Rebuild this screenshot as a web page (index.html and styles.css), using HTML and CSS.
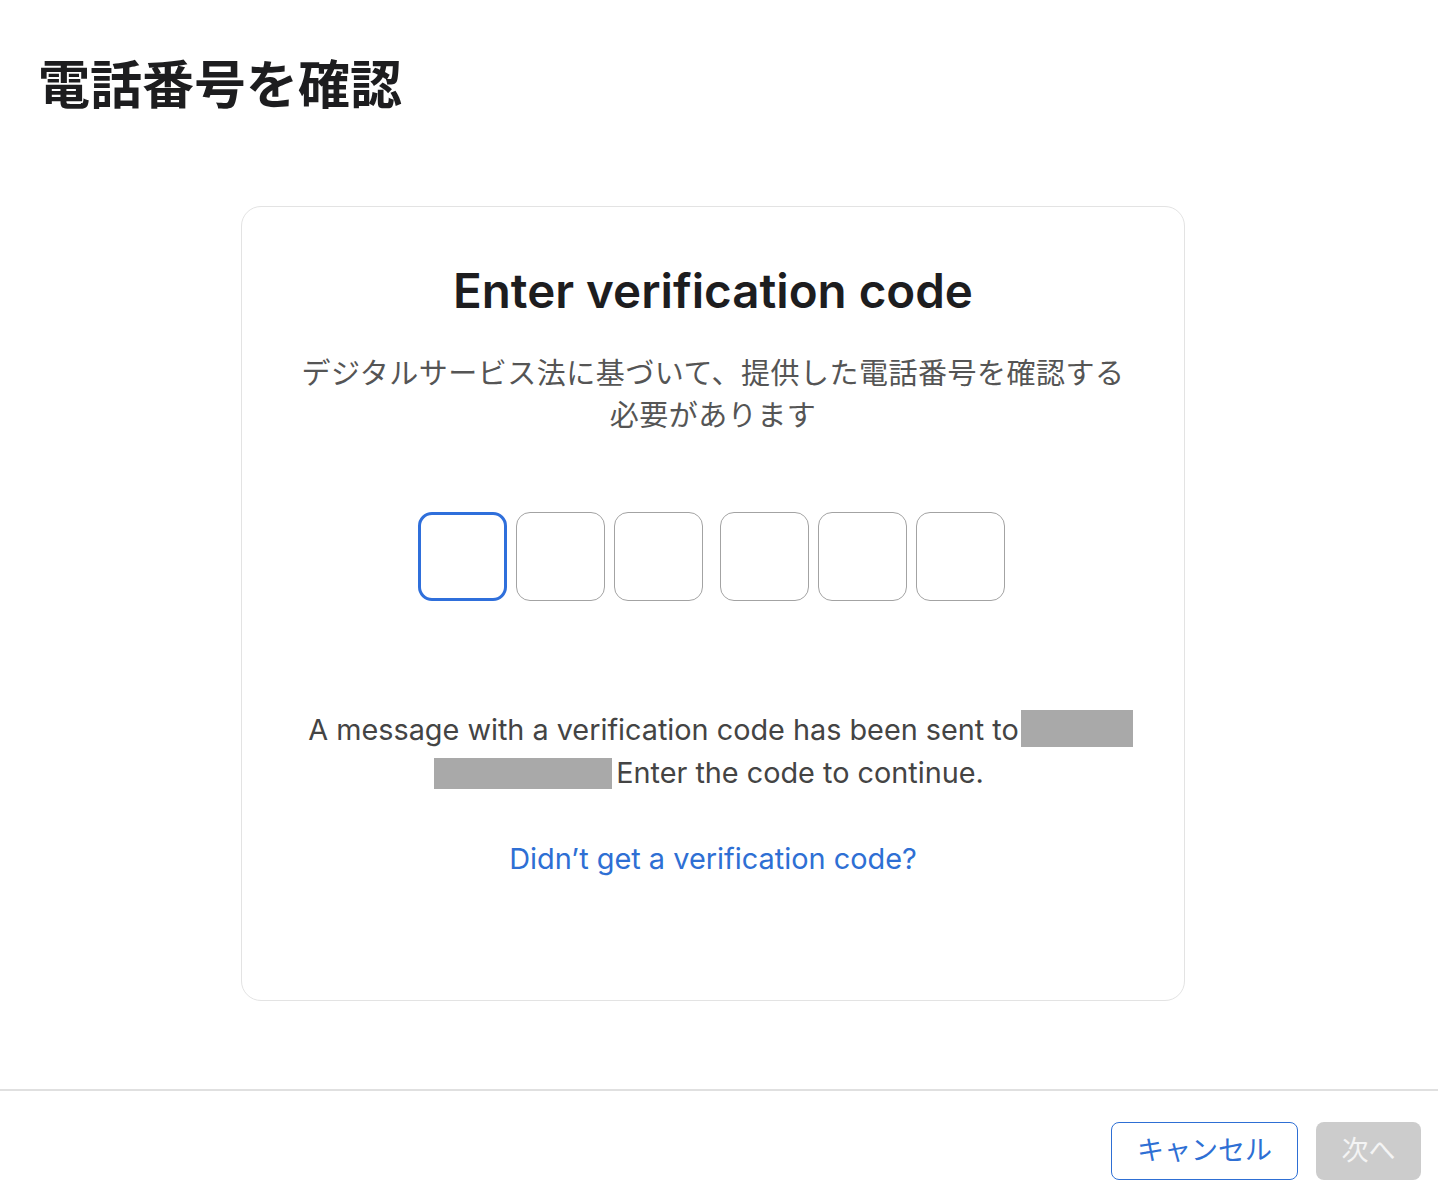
FILE: index.html
```html
<!DOCTYPE html>
<html lang="ja">
  <head>
    <meta charset="UTF-8" />
    <meta name="viewport" content="width=device-width, initial-scale=1.0" />
    <title>電話番号を確認</title>
    <link rel="stylesheet" href="styles.css">
  </head>
  <body>
    <div class="page">
      <h1 class="page-title">電話番号を確認</h1>

      <div class="card">
        <h2 class="card-title">Enter verification code</h2>
        <p class="subtitle">
          デジタルサービス法に基づいて、提供した電話番号を確認する<br>必要があります
        </p>

        <div class="code-inputs">
          <div class="code-group">
            <input class="code-box active" type="text" maxlength="1" />
            <input class="code-box" type="text" maxlength="1" />
            <input class="code-box" type="text" maxlength="1" />
          </div>
          <div class="code-group">
            <input class="code-box" type="text" maxlength="1" />
            <input class="code-box" type="text" maxlength="1" />
            <input class="code-box" type="text" maxlength="1" />
          </div>
        </div>

        <div class="message">
          <span class="message-line first">A message with a verification code has been sent to<span class="redact redact-a"></span></span>
          <span class="message-line second"><span class="redact redact-b"></span>Enter the code to continue.</span>
        </div>

        <a class="resend" href="#">Didn’t get a verification code?</a>
      </div>
    </div>

    <div class="footer">
      <button class="btn btn-cancel">キャンセル</button>
      <button class="btn btn-next" disabled>次へ</button>
    </div>
  </body>
</html>
```

FILE: styles.css
```css
body {
  margin: 0;
  background-color: #fff;
  color: #1d1d1f;
  font-family: Inter, "Noto Sans CJK JP", sans-serif;
}

.page {
  height: 1089px;
  padding-top: 47px;
  box-sizing: border-box;
}

.page-title {
  margin: 0 0 0 38px;
  font-family: "Noto Sans CJK JP", sans-serif;
  font-size: 52px;
  font-weight: 700;
  line-height: 70px;
  color: #1d1d1f;
}

.card {
  margin: 89px 0 0 241px;
  width: 944px;
  height: 795px;
  box-sizing: border-box;
  border: 1.5px solid #e3e3e3;
  border-radius: 20px;
  text-align: center;
  padding-top: 56px;
}

.card-title {
  margin: 0;
  font-size: 47.5px;
  font-weight: 600;
  line-height: 56px;
  color: #1d1d1f;
}

.subtitle {
  margin: 31px 0 0;
  font-family: "Noto Sans CJK JP", sans-serif;
  font-size: 29px;
  letter-spacing: 0.5px;
  line-height: 42px;
  color: #555;
}

.code-inputs {
  display: flex;
  justify-content: center;
  gap: 17px;
  margin-top: 78px;
  padding-right: 3px;
}

.code-group {
  display: flex;
  gap: 9px;
}

.code-box {
  width: 89px;
  height: 89px;
  box-sizing: border-box;
  border: 1.5px solid #a3a3a3;
  border-radius: 14px;
  outline: none;
  padding: 0;
  background: #fff;
  font-size: 36px;
  text-align: center;
}

.code-box.active {
  border: 3.5px solid #2f6fdb;
}

.message {
  margin-top: 107px;
  font-size: 28.8px;
  line-height: 43px;
  color: #444;
}

.message-line {
  display: block;
}

.message-line.first {
  padding-left: 15px;
}

.message-line.second {
  padding-right: 8px;
}

.redact {
  display: inline-block;
  background-color: #a9a9a9;
  vertical-align: middle;
}

.redact-a {
  width: 112px;
  height: 37px;
  margin-left: 2px;
  margin-top: -8px;
}

.redact-b {
  width: 178px;
  height: 31px;
  margin-right: 4px;
  margin-top: -4px;
}

.resend {
  display: inline-block;
  margin-top: 45px;
  font-size: 28.9px;
  line-height: 40px;
  color: #2e6fd4;
  text-decoration: none;
}

.footer {
  border-top: 2px solid #e0e0e0;
  display: flex;
  justify-content: flex-end;
  gap: 18px;
  padding: 31px 17px 0 0;
}

.btn {
  height: 58px;
  box-sizing: border-box;
  border-radius: 8px;
  font-family: "Noto Sans CJK JP", sans-serif;
  font-size: 27px;
  line-height: 52px;
  padding: 0 0 4px;
}

.btn-cancel {
  width: 187px;
  background-color: #fff;
  border: 1.5px solid #2e6fd4;
  color: #2e6fd4;
  cursor: pointer;
}

.btn-next {
  width: 105px;
  background-color: #cccccc;
  border: none;
  color: #f4f4f4;
}
```
